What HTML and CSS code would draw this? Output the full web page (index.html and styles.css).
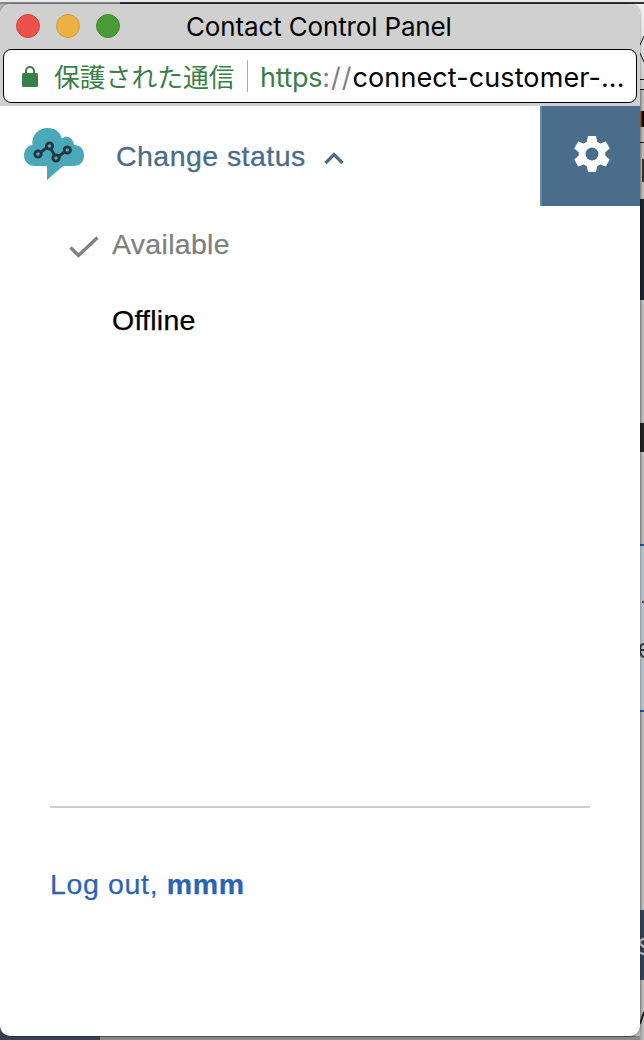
FILE: index.html
```html
<!DOCTYPE html>
<html lang="ja">
<head>
<meta charset="utf-8">
<title>Contact Control Panel</title>
<link rel="stylesheet" href="styles.css">
</head>
<body>
<div class="desktop">
  <svg class="backdrop" width="644" height="1040" viewBox="0 0 644 1040" aria-hidden="true">
    <defs><linearGradient id="edge"><stop stop-color="#9b9b9b"/><stop offset="1" stop-color="#c4c4c4"/></linearGradient>
    <linearGradient id="tab" x2="0" y2="1"><stop stop-color="#f0f0f0"/><stop offset="1" stop-color="#c8c8c8"/></linearGradient></defs>
    <rect width="644" height="1040" fill="#b5b5b5"/>
    <rect width="644" height="2" fill="#e9e9ee"/>
    <rect y="2" width="644" height="2" fill="#30303a"/>
    <rect y="2" width="120" height="2" fill="#88888b"/>
    <rect x="630" y="4" width="14" height="90" fill="url(#tab)"/>
    <rect x="640" y="90" width="4" height="950" fill="url(#edge)"/>
    <path d="M644 36l-4 9M640 53l4 9M640 79.500h4M640 89.500h4M640 142.500h4" fill="none" stroke="#111"/>
    <path d="M640 111h4v16h-4z" fill="#080b12"/><path d="M640 111h1.500v16h-1.500z" fill="#a85a18"/>
    <path d="M642 159h2v23h-2z" fill="#333"/>
    <path d="M640 199h4v101h-4z" fill="#1c232d"/>
    <path d="M640 423h4v29h-4z" fill="#222"/>
    <path d="M640 544h4v168h-4z" fill="#b3bdc6"/>
    <path d="M640 544h4v2h-4zM640 710h4v2h-4z" fill="#204f91"/>
    <path d="M642 601h2v2h-2z" fill="#633c32"/>
    <path d="M644 644q-4 0-4 6t4 7M640 650h4" fill="none" stroke="#333" stroke-width="2"/>
    <path d="M640 910h4v70h-4z" fill="#334052"/>
    <path d="M644 939q-4 0-4 4c0 3 4 2 4 5M640 952q1 2 4 2" fill="none" stroke="#bbb" stroke-width="2"/>
    <path d="M640 1024l4-12" stroke="#222" stroke-width="2"/>
    <path d="M0 1020h100v20H0z" fill="#364256"/>
    <path d="M100 1036h540v4H100z" fill="#8c8989"/>
    <path d="M0 1036.500h636" stroke="#333" stroke-opacity=".5"/>
  </svg>
  <main class="window">
    <header class="titlebar">
      <div class="lights"><i class="light close"></i><i class="light minimize"></i><i class="light expand"></i></div>
      <h1 class="title">Contact Control Panel</h1>
    </header>
    <div class="location">
      <div class="address">
        <svg class="lock" width="16" height="22" viewBox="0 0 16 22"><rect y="7" width="16" height="14" rx="1.500" fill="#3a7e48"/><path d="M4 8V5a4 4 0 0 1 8 0v3" fill="none" stroke="#3a7e48" stroke-width="2"/></svg>
        <span class="secure">保護された通信</span>
        <span class="separator"></span>
        <span class="url"><span class="scheme">https</span><span class="slashes">://</span>connect-customer-...</span>
      </div>
    </div>
    <section class="toolbar">
      <svg class="logo" width="60" height="52" viewBox="0 0 60 52">
        <path d="M11 38C4 38 0 33 0 27.500S4 17 8.500 17C7 8 14 0 23.500 0 31 0 36 4 38 10.500 42 7 49 9 50 17 56 17 60 21 60 27.500S56 38 49 38H39L23 52V38z" fill="#4aa9b8"/>
        <g fill="none" stroke="#263442" stroke-width="2.800"><path d="M17 24l5.500-4M27 21l4 7M35 28l5.500-4"/><circle cx="14" cy="26" r="3.200"/><circle cx="25.500" cy="18" r="3.200"/><circle cx="32" cy="30" r="3.200"/><circle cx="43.300" cy="22" r="3.200"/></g>
      </svg>
      <span class="status-label">Change status</span>
      <svg class="caret" width="20" height="14" viewBox="0 0 20 14"><path d="M1.500 12L10 3.500 18.500 12" fill="none" stroke="#4a6d8b" stroke-width="3.200"/></svg>
      <button class="settings" aria-label="Settings">
        <svg width="36" height="36" viewBox="-18 -18 36 36"><path fill="#fff" fill-rule="evenodd" d="M-4-18H4L5.200-12.300 8.200-10.600 13.800-12.500 17.800-5.600 13.300-1.700V1.700L17.800 5.600 13.800 12.500 8.200 10.600 5.200 12.300 4 18H-4L-5.200 12.300-8.200 10.600-13.800 12.500-17.800 5.600-13.300 1.700V-1.700L-17.800-5.600-13.800-12.500-8.200-10.600-5.200-12.300zM0-6.500a6.500 6.500 0 1 0 0 13 6.500 6.500 0 0 0 0-13z"/></svg>
      </button>
    </section>
    <ul class="statuses">
      <li class="status selected"><svg class="check" width="30" height="22" viewBox="0 0 30 22"><path d="M1.500 11.500l8 8L28.500 1.500" fill="none" stroke="#808080" stroke-width="3.300"/></svg><span class="available">Available</span></li>
      <li class="status"><span class="offline">Offline</span></li>
    </ul>
    <footer class="account"><a class="logout">Log out, <b>mmm</b></a></footer>
  </main>
</div>
</body>
</html>
```

FILE: styles.css
```css
* { box-sizing: border-box; }
body { margin: 0; overflow: hidden; font-family: "Liberation Sans", Arial, sans-serif; }
.desktop { position: relative; width: 644px; height: 1040px; padding-top: 4px; }
.backdrop { position: absolute; inset: 0; }
.window { position: relative; display: flex; flex-direction: column; width: 640px; height: 1032px; overflow: hidden; background: #fff; border-radius: 10px; box-shadow: 0 0 2px rgba(0, 0, 0, .6); }
.titlebar { display: grid; grid-template-columns: 186px 1fr; align-items: center; height: 44px; background: #d0d0d0; }
.lights { display: flex; gap: 16px; padding-left: 16px; }
.light { width: 24px; height: 24px; border: 1px solid; border-radius: 50%; }
.close { background: #ed514b; border-color: #cf4640; }
.minimize { background: #ebb242; border-color: #cd9b3b; }
.expand { background: #499c38; border-color: #428832; }
.title { margin: 0; padding-top: 2px; font: 400 26px/42px Inter, sans-serif; letter-spacing: -.15px; white-space: nowrap; }
.location { height: 58px; padding: 1px 2px 2px; background: #d0d0d0; }
.address { display: flex; align-items: center; height: 54px; padding-left: 18px; background: #fff; border: 1px solid #000; border-radius: 8px; margin: 0 1px; white-space: nowrap; }
.lock { flex: none; margin-top: 2px; }
.secure { width: 182px; margin-left: 16px; color: #3a7e48; font: 25.8px/40px "Noto Sans CJK JP", sans-serif; }
.separator { width: 1px; height: 32px; margin: 0 12px 0 11px; background: #aaa; }
.url { padding-top: 3px; font: 27px/40px Inter, sans-serif; letter-spacing: .1px; }
.scheme { color: #3a7e48; letter-spacing: -.3px; }
.slashes { color: #808080; letter-spacing: 1px; }
.toolbar { display: flex; align-items: center; height: 100px; padding-left: 24px; }
.logo { margin-bottom: 4px; }
.status-label { width: 190px; margin-left: 32px; color: #4a6d8b; font-size: 28.5px; letter-spacing: .45px; white-space: nowrap; -webkit-text-stroke: .3px currentColor; }
.caret { margin: 3px 0 0 18px; }
.settings { display: grid; place-items: center; width: 100px; height: 100px; margin-left: auto; padding: 0 0 4px 2px; background: #4a6d8b; border: 0; border-left: 2px solid #638ba8; }
.statuses { margin: 0; padding: 0 0 0 112px; list-style: none; font-size: 28.5px; }
.status { display: flex; align-items: center; height: 76px; }
.selected { margin-left: -43px; color: #808080; }
.check { margin: 5px 13px 0 0; }
.available, .offline { -webkit-text-stroke: .25px currentColor; }
.available { letter-spacing: .3px; }
.offline { letter-spacing: .25px; }
.account { margin: auto 50px 0; height: 230px; padding-top: 58px; border-top: 2px solid #ccc; }
.logout { color: #2b64b5; font-size: 28.5px; line-height: 36px; letter-spacing: .65px; -webkit-text-stroke: .25px currentColor; }
```
